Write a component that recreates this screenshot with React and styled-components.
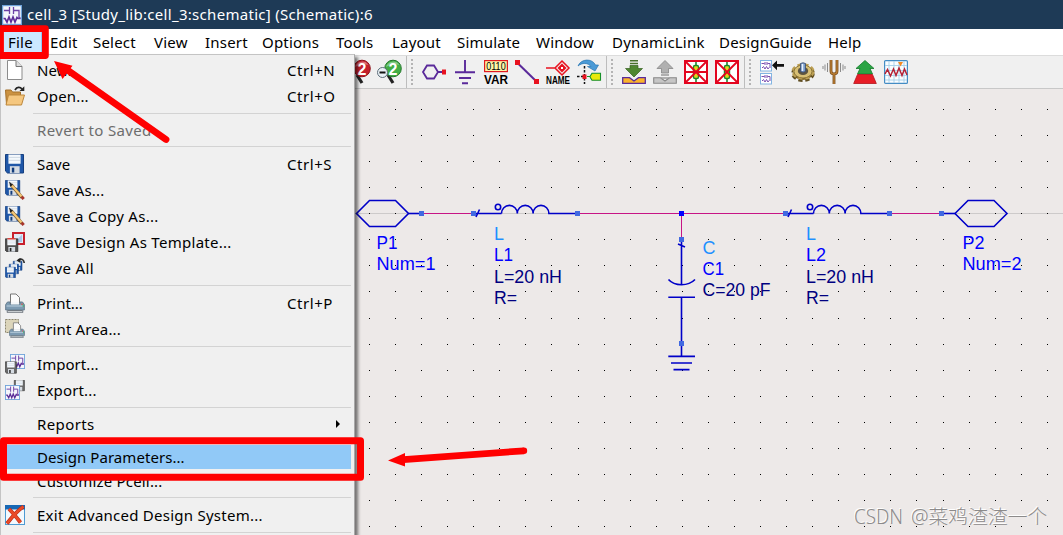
import React from 'react';
import styled, { createGlobalStyle } from 'styled-components';

const GlobalStyle = createGlobalStyle`
  body {
    margin: 0;
    overflow: hidden;
    font-family: 'Noto Sans', 'Open Sans', sans-serif;
    font-size: 15px;
    color: #000;
  }
`;

const Window = styled.div`
  position: relative;
  display: flex;
  flex-direction: column;
  width: 1063px;
  height: 535px;
  overflow: hidden;
  background: #ede9e8;
`;

const TitleBar = styled.header`
  display: flex;
  align-items: center;
  gap: 5px;
  flex: none;
  height: 29px;
  padding-left: 2px;
  color: #fff;
  background: #1e3a56;
  white-space: pre;
`;

const TitleText = styled.span`
  margin-top: -1px;
  letter-spacing: 0.3px;
`;

const MenuBar = styled.nav`
  display: flex;
  flex: none;
  height: 26px;
  background: #fff;
`;

const MenuBarItem = styled.div`
  box-sizing: border-box;
  flex: none;
  width: ${({ $width }) => $width}px;
  padding-left: 8px;
  line-height: 27px;
  letter-spacing: 0.2px;
  background: ${({ $open }) => ($open ? '#cce8ff' : 'transparent')};
  border-right: ${({ $open }) => ($open ? '1px solid #90c8f6' : '0')};
`;

const Toolbar = styled.div`
  display: flex;
  flex: none;
  box-sizing: border-box;
  height: 34px;
  padding-left: 339px;
  background: #f0f0f0;
  border-top: 1px solid #dcdcdc;
  border-bottom: 1px solid #c8c8c8;
`;

const ToolGroup = styled.div`
  display: flex;
  align-items: center;
  box-sizing: border-box;
  gap: 7px;
  width: ${({ $width }) => $width};
  padding-left: 7px;
  border-left: ${({ $first }) => ($first ? '0' : '1px solid #bdbdbd')};
`;

const Handle = styled.div`
  flex: none;
  width: 2px;
  height: 26px;
  margin-left: -3px;
  margin-right: 2px;
  background: repeating-linear-gradient(#b4b4b4 0 2px, transparent 2px 4px);
`;

const ToolIcon = styled.svg`
  flex: none;
  width: 24px;
  height: 24px;
  overflow: visible;
`;

const Canvas = styled.main`
  flex: 1;
  min-height: 0;
`;

const Drawing = styled.svg`
  display: block;
  font-family: 'Liberation Sans', Arial, sans-serif;
  font-size: 18.8px;
`;

const Popup = styled.div`
  position: absolute;
  top: 54px;
  left: 0;
  box-sizing: border-box;
  width: 355px;
  height: 490px;
  padding-top: 2px;
  background: #f0f0f0;
  border: 1px solid #c4c4c4;
  border-right-color: #a8a8a8;
  box-shadow: 3px 3px 3px rgba(0, 0, 0, 0.5);
`;

const MenuItem = styled.div`
  display: flex;
  align-items: center;
  box-sizing: border-box;
  height: ${({ $height }) => $height || 26}px;
  margin: ${({ $margin }) => $margin || '0'};
  margin-right: 3px;
  padding-left: 4px;
  color: ${({ $disabled }) => ($disabled ? '#6d6d6d' : '#000')};
  background: ${({ $active }) => ($active ? '#91c9f7' : 'transparent')};
`;

const ItemIcon = styled.svg`
  flex: none;
  width: 20px;
  height: 20px;
  margin-right: 12px;
`;

const ItemLabel = styled.span`
  flex: 1;
  letter-spacing: ${({ $spacing }) => $spacing || 0}px;
`;

const Shortcut = styled.span`
  width: 64px;
  letter-spacing: 0.55px;
`;

const SubArrow = styled.span`
  width: 0;
  margin-right: 11px;
  border: 4px solid transparent;
  border-left: 4px solid #000;
  border-right: 0;
`;

const Separator = styled.div`
  height: 1px;
  margin: ${({ $top }) => $top}px 3px ${({ $bottom }) => $bottom}px 32px;
  background: #d3d3d3;
`;

const Marks = styled.svg`
  position: absolute;
  inset: 0;
`;

const Watermark = styled.div`
  position: absolute;
  left: 854px;
  top: 503px;
  display: flex;
  gap: 7px;
  font: 300 19.8px/28px 'Noto Sans', 'Noto Sans CJK SC', sans-serif;
  color: #8c8a8a;
  text-shadow: -1px -1px 0 #fff;
  white-space: nowrap;
`;

const WatermarkLatin = styled.span`
  transform: scaleX(${({ $scale }) => $scale});
  transform-origin: left;
  width: ${({ $width }) => $width}px;
`;

/* ---------- menu icons, 20 x 20 ---------- */

const Floppy = ({ x = 0, y = 0, size = 20, color = '#1f57a8', dark = '#123c7c' }) => (
  <g transform={`translate(${x} ${y}) scale(${size / 20})`}>
    <path d="M0.5 0.5H19V19.5H2.5L0.5 17.5Z" fill={color} stroke={dark} />
    <path d="M3.5 0.5H16V10H3.5Z" fill="#f4f8fc" />
    <path d="M4 3.5H15.5M4 6.5H15.5" stroke="#cfd8e2" />
    <path d="M5 12.5H15V19.5H5Z" fill="#d5dbe2" />
    <path d="M7 14H9.5V19H7Z" fill={dark} />
  </g>
);

const Pencil = () => (
  <g>
    <path d="M6 4.5L17 17.5" stroke="#7c5a28" strokeWidth="3.4" />
    <path d="M6.5 5L16.5 16.5" stroke="#f5c878" strokeWidth="2" />
    <path d="M4 1.5L8 4.8L5.3 6.8Z" fill="#222" />
    <path d="M16.6 16.8L18.7 19" stroke="#a8342b" strokeWidth="3" />
  </g>
);

const SchematicTile = ({ x = 0, y = 0, size = 20 }) => (
  <g transform={`translate(${x} ${y}) scale(${size / 20})`}>
    <rect x="0.6" y="0.6" width="18.8" height="18.8" fill="#f4f6fc" stroke="#6fa3da" strokeWidth="1.2" />
    <path
      d="M2 5.5H7M7.5 2V9M11.5 2V9M12 5.5H17V13H18.5"
      fill="none"
      stroke="#6b41a6"
      strokeWidth="1.3"
    />
    <path
      d="M1.5 13.5H3L5 17L7 12L9 17L11 12L13 17L15 12.5L16 13.5H18.5"
      fill="none"
      stroke="#5b2e98"
      strokeWidth="1.7"
    />
  </g>
);

const Printer = ({ x = 0, y = 0, size = 20 }) => (
  <g transform={`translate(${x} ${y}) scale(${size / 20})`}>
    <path d="M5.5 10V1H11L14.5 4.5V10Z" fill="#fbfbfb" stroke="#777" />
    <path d="M2.5 9L0.7 11.5V17H19.3V11.5L17.5 9H15V11H5V9Z" fill="#7d9bb2" stroke="#667c8e" />
    <path d="M6 9H14V11.5H6Z" fill="#f4f7f9" />
    <path d="M1.5 13H18.5" stroke="#bcd0de" />
    <path d="M2.5 17.5H17.5L18 19.3H2Z" fill="#dde2e5" stroke="#697078" strokeWidth="0.9" />
    <path d="M17 10.5V12" stroke="#e25345" strokeWidth="1.3" />
    <path d="M18.2 11.5V14" stroke="#43b06a" />
  </g>
);

const menuIcons = {
  blank: (
    <g>
      <path d="M2.5 0.5H11L17 6.5V19.5H2.5Z" fill="#fff" stroke="#8b8b8b" />
      <path d="M11 0.5V6.5H17" fill="#dedede" stroke="#777" />
    </g>
  ),
  folder: (
    <g>
      <path d="M0.5 4H6L7.5 6H15.5V18.5H1.5Z" fill="#cb9241" stroke="#a5712b" />
      <path d="M3.5 9H19.5L16.5 19H1Z" fill="#f5c77f" stroke="#bd873b" />
      <path d="M10 4C12 0.8 15 0.8 17 3" fill="none" stroke="#222" strokeWidth="1.8" />
      <path d="M14.5 5H19.3V0.3Z" fill="#222" />
    </g>
  ),
  save: <Floppy size={19.5} />,
  saveAs: (
    <g>
      <Floppy size={15.5} />
      <Pencil />
    </g>
  ),
  template: (
    <g>
      <rect x="8" y="1" width="11" height="11" fill="#dfeaf6" stroke="#c8202c" strokeWidth="2" />
      <path d="M10 10L17 2.5V10Z" fill="#a9c6e8" />
      <Floppy y={6.5} size={13.5} color="#4d4d4d" dark="#262626" />
      <path d="M2.5 6.8H10.5" stroke="#e23b35" strokeWidth="1.4" />
    </g>
  ),
  saveAll: (
    <g>
      <Floppy x={8} y={3} size={9.5} />
      <Floppy x={4} y={6} size={10} />
      <Floppy y={9} size={11} />
      <path d="M13 2C17 0 19 2 19.2 5" fill="none" stroke="#333" strokeWidth="1.7" />
      <path d="M11.5 2.5L15.5 0V5Z" fill="#222" />
    </g>
  ),
  print: <Printer />,
  printArea: (
    <g>
      <rect x="0.5" y="0.5" width="13" height="13" fill="#dcd5ba" stroke="#8c866f" strokeDasharray="2 1" />
      <Printer x={4} y={3} size={16} />
    </g>
  ),
  importFile: (
    <g>
      <SchematicTile x={5} y={0} size={15} />
      <Floppy y={7.5} size={12} color="#6a6a6a" dark="#2c2c2c" />
    </g>
  ),
  exportFile: (
    <g>
      <Floppy x={9} y={0} size={11} color="#6a6a6a" dark="#2c2c2c" />
      <SchematicTile x={0} y={5} size={15} />
    </g>
  ),
  exit: (
    <g>
      <rect x="0.5" y="0.5" width="19" height="19" fill="#f3f9fe" stroke="#4e9ad2" />
      <path d="M0 0H20V4.5H0Z" fill="#1768b5" />
      <path d="M4 4C7 7 12 13 15.5 17.5M18.5 1.5C12 6 7 12 2 18.5" fill="none" stroke="#b92b14" strokeWidth="3.8" />
      <path d="M4 4C7 7 12 13 15.5 17.5M18.5 1.5C12 6 7 12 2 18.5" fill="none" stroke="#ea4a28" strokeWidth="2.6" />
    </g>
  ),
};

/* ---------- toolbar icons, 24 x 24 ---------- */

const Zoom2 = ({ color, dark, minus }) => (
  <ToolIcon viewBox="0 0 24 24">
    <path d="M11 15L16 23" stroke="#222" strokeWidth="3.2" />
    <circle cx="16" cy="8.5" r="8.3" fill={color} stroke={dark} strokeWidth="1" />
    <path d="M9 7A7.5 7.5 0 0 1 22.5 5Q15 3 9 7Z" fill="#fff" opacity="0.35" />
    <text x="11.5" y="14.5" fill="#fff" fontFamily="Liberation Sans" fontWeight="700" fontSize="16">2</text>
    {minus && (
      <g>
        <circle cx="5.5" cy="12.5" r="5" fill="#e9f1f6" stroke="#5e6e7b" />
        <path d="M2.5 12.5H8.5" stroke="#111" strokeWidth="2" />
      </g>
    )}
  </ToolIcon>
);

const PortIcon = () => (
  <ToolIcon viewBox="0 0 24 24">
    <path d="M1 12L5 5.5H12L16 12L12 18.5H5ZM16 12H20" fill="none" stroke="#5a2a9a" strokeWidth="1.8" />
    <path d="M20 9.5H24V14.5H20Z" fill="#e8121f" />
  </ToolIcon>
);

const GroundIcon = () => (
  <ToolIcon viewBox="0 0 24 24">
    <path d="M12 0V12M2 12.3H22M6 18H18M9 23.2H15" fill="none" stroke="#5a2a9a" strokeWidth="1.9" />
  </ToolIcon>
);

const VarIcon = () => (
  <ToolIcon viewBox="0 0 24 24">
    <rect x="0.6" y="0.6" width="22.8" height="11" fill="#fdf6a8" stroke="#e0191f" strokeWidth="1.2" />
    <text x="2.2" y="10" textLength="19.5" lengthAdjust="spacingAndGlyphs" fontFamily="Liberation Sans" fontSize="10.5">0110</text>
    <text x="0" y="24" textLength="24" lengthAdjust="spacingAndGlyphs" fontFamily="Liberation Sans" fontWeight="700" fontSize="12">VAR</text>
  </ToolIcon>
);

const WireIcon = () => (
  <ToolIcon viewBox="0 0 24 24">
    <path d="M2 2.5L22 22" stroke="#5a2a9a" strokeWidth="2" />
    <path d="M0 0H5V5H0ZM19 19H24V24H19Z" fill="#e8121f" />
  </ToolIcon>
);

const NameIcon = () => (
  <ToolIcon viewBox="0 0 24 24">
    <path d="M0 8H9M16 1L23 8L16 15L9 8Z" fill="none" stroke="#e8121f" strokeWidth="1.5" />
    <path d="M16 3.5L20.5 8L16 12.5L11.5 8Z" fill="#e8121f" />
    <path d="M15 7H17V9H15Z" fill="#fff" />
    <text x="0" y="24" textLength="24" lengthAdjust="spacingAndGlyphs" fontFamily="Liberation Sans" fontWeight="700" fontSize="10">NAME</text>
  </ToolIcon>
);

const RotateIcon = () => (
  <ToolIcon viewBox="0 0 24 24">
    <path d="M7.5 6V24M0 16.5H6" stroke="#111" strokeWidth="1.5" strokeDasharray="2.5 1.5" />
    <path d="M1 6C4 -1.5 15 -2 18.5 5H21.5L18 11L10.5 6.5H14C11 2.5 5 2.5 1 6Z" fill="#4a9ad6" stroke="#2976b2" strokeWidth="0.7" />
    <path d="M5.5 14.5H9.5V19H5.5Z" fill="#e8121f" />
    <path d="M10 16.5H13L15 13.2H23.5V20.2H15L13 17" fill="#e9e90c" stroke="#17902a" strokeWidth="1.1" />
  </ToolIcon>
);

const PushIcon = () => (
  <ToolIcon viewBox="0 0 24 24">
    <path d="M0.7 17.7H7.5L12 21L16.5 17.7H23.3V23.3H0.7Z" fill="#fbb32b" stroke="#5a2a9a" strokeWidth="1.3" />
    <path d="M8 0.8H16M8 3.5H16" stroke="#47702a" strokeWidth="1.6" />
    <path d="M8 5.5H16V8.5H20.5L12 17L3.5 8.5H8Z" fill="#4f8730" stroke="#35601f" strokeWidth="0.7" />
  </ToolIcon>
);

const PopIcon = () => (
  <ToolIcon viewBox="0 0 24 24">
    <path d="M0.7 17.7H7.5L12 21L16.5 17.7H23.3V23.3H0.7Z" fill="#c6c6c6" stroke="#888" strokeWidth="1.1" />
    <path d="M12 0.5L20 8.5H15.5V13H8.5V8.5H4Z" fill="#b0b0b0" stroke="#858585" strokeWidth="0.8" />
    <path d="M8 15H16M8 18H16" stroke="#999" strokeWidth="1.4" />
  </ToolIcon>
);

const DeactivateIcon = ({ shorted }) => (
  <ToolIcon viewBox="0 0 24 24">
    <rect x="1" y="1" width="22" height="22" fill="#fff" stroke="#e3051f" strokeWidth="2" />
    <path d="M12 2V22" stroke="#177b25" strokeWidth="1.5" />
    <rect x="9.5" y="5.5" width="5" height="13" rx="1.5" fill="#e3d51a" stroke="#198a2a" strokeWidth="1.4" />
    <path d="M2 2L22 22M22 2L2 22" stroke="#e3051f" strokeWidth="1.8" />
    {shorted && <path d="M1 12H23" stroke="#e3051f" strokeWidth="2" />}
  </ToolIcon>
);

const HierarchyIcon = () => (
  <ToolIcon viewBox="0 0 24 24">
    {[0, 13].map((y) => (
      <g key={y} transform={`translate(0 ${y})`}>
        <rect x="0.5" y="0.5" width="11" height="10.5" fill="#fff" stroke="#82b4e2" />
        <path d="M1.5 3.5H4.5M5 2V5M7 2V5M7.5 3.5H10V8M2 8L3.5 6.5L5 9L6.5 6.5L8 9L9 7.5" fill="none" stroke="#6b3ba8" strokeWidth="0.9" />
      </g>
    ))}
    <path d="M12 5.3L17 0.5V4H24V6.8H17V10.2Z" fill="#111" />
  </ToolIcon>
);

const GearIcon = () => (
  <ToolIcon viewBox="0 0 24 24">
    <ellipse cx="12" cy="13.5" rx="9.8" ry="6.5" fill="#8b7030" stroke="#5f4d20" strokeWidth="4" strokeDasharray="4 2.6" />
    <ellipse cx="12" cy="11.5" rx="9.8" ry="6.5" fill="#d5b966" stroke="#bda054" strokeWidth="3.6" strokeDasharray="4 2.6" />
    <ellipse cx="12" cy="11.5" rx="9" ry="6.5" fill="#d8bf73" stroke="#7d682f" strokeWidth="0.8" />
    <ellipse cx="12" cy="11" rx="5.2" ry="4" fill="#5c5440" />
    <path d="M9.5 3.5Q12 2 14.5 3.5V11.5Q12 13 9.5 11.5Z" fill="#7a9cca" stroke="#384b70" strokeWidth="0.8" />
    <path d="M11.5 4V11" stroke="#e9f1fb" strokeWidth="1.5" />
  </ToolIcon>
);

const TuneIcon = () => (
  <ToolIcon viewBox="0 0 24 24">
    <path d="M9 0V11Q9 14 12 14Q15 14 15 11V0M12 14V24" fill="none" stroke="#704516" strokeWidth="2.8" />
    <path d="M9 0V11Q9 14 12 14Q15 14 15 11V0M12 14V24" fill="none" stroke="#b77b32" strokeWidth="1.5" />
    <path d="M5.5 3V12M3 4.5V10.5M1 6V9M18.5 3V12M21 4.5V10.5M23 6V9" stroke="#8b8b8b" />
  </ToolIcon>
);

const OptimizeIcon = () => (
  <ToolIcon viewBox="0 0 24 24">
    <path d="M12 0.5L21 8.5H17L19.5 14H4.5L7 8.5H3Z" fill="#2ba545" stroke="#147b2b" strokeWidth="0.8" />
    <path d="M4.5 14.5H19.5L23.3 23.5H0.7Z" fill="#e71d26" stroke="#b3131b" strokeWidth="0.8" />
  </ToolIcon>
);

const DataDisplayIcon = () => (
  <ToolIcon viewBox="0 0 24 24">
    <rect x="0.6" y="0.6" width="22.8" height="22.8" rx="1" fill="#fafdff" stroke="#438cc4" strokeWidth="1.2" />
    <path d="M5 1V23M10 1V23M15 1V23M20 1V23M1 5.5H23M1 10.5H23M1 15.5H23M1 20H23" stroke="#a5cfe9" strokeWidth="0.9" />
    <path d="M1 14L3.5 9.5L6.5 16L9.5 9L12 15.5L15 8L18 15.5L20.5 9L23 15" fill="none" stroke="#b42236" strokeWidth="1.5" />
    <path d="M14 2H19L16.5 6.5Z" fill="#f28a24" />
  </ToolIcon>
);

/* ---------- schematic ---------- */

const blue = '#0000c8';

const Pin = ({ x, y, color = '#4169e1' }) => (
  <rect x={x - 2.5} y={y - 2.5} width="5" height="5" fill={color} />
);

const Label = ({ x, y, width, color, children }) => (
  <text x={x} y={y - 0.5} textLength={width} lengthAdjust="spacingAndGlyphs" fill={color}>{children}</text>
);

const Port = ({ x }) => (
  <path
    d={`M${x} 213.5L${x + 13} 200.5H${x + 39}L${x + 52} 213.5L${x + 39} 226.5H${x + 13}Z`}
    fill="none"
    stroke={blue}
    strokeWidth="1.6"
  />
);

const Inductor = ({ x, name, nameWidth }) => (
  <g>
    <g fill="none" stroke={blue} strokeWidth="1.6">
      <path d={`M${x} 213.5H${x + 28}M${x + 2.5} 217L${x + 6} 209.5`} />
      <path d={`M${x + 28} 213.5a7.8 8 0 0 1 15.8 0a7.8 8 0 0 1 15.8 0a7.8 8 0 0 1 15.8 0H${x + 104}`} />
      <circle cx={x + 24.5} cy="207" r="2.7" />
    </g>
    <Pin x={x} y={213.5} />
    <Pin x={x + 104} y={213.5} />
    <Label x={x + 20.5} y={240} width={10} color="#1e90ff">L</Label>
    <Label x={x + 20.5} y={261} width={nameWidth} color="#0000ff">{name}</Label>
    <Label x={x + 20.5} y={283} width={68} color="#000080">L=20 nH</Label>
    <Label x={x + 20.5} y={304} width={23} color="#000080">R=</Label>
  </g>
);

const dots = [];
for (let row = 0; row < 17; row += 1) {
  for (let col = 0; col < 27; col += 1) {
    dots.push([Math.round(369 + col * 26.07), Math.round(109 + row * 26.07)]);
  }
}

const Schematic = () => (
  <Drawing width="1063" height="446" viewBox="0 89 1063 446">
    <path d="M0 213.5H1063" stroke="#cdcaca" />
    <path d={dots.map(([x, y]) => `M${x} ${y}h1v1h-1z`).join('')} fill="#000" />
    <path d="M421 213.5H473M577 213.5H785M889 213.5H941M681.5 213V239" stroke="#c71585" />

    <Port x={356.5} />
    <path d="M408.5 213.5H421" stroke={blue} strokeWidth="1.6" />
    <Pin x={421.5} y={213.5} />
    <Label x={376.5} y={249} width={21} color="#0000ff">P1</Label>
    <Label x={376.5} y={270} width={59} color="#0000ff">Num=1</Label>

    <Inductor x={473.5} name="L1" nameWidth={19} />
    <Inductor x={785.5} name="L2" nameWidth={20} />

    <g fill="none" stroke={blue} strokeWidth="1.6">
      <path d="M681.5 240V284.5M678 244L685 247M668.5 279.5Q673 284.7 681.5 284.7Q690 284.7 695 279.5" />
      <path d="M668.3 297.3H695M681.5 297.3V356.3M668.3 356.4H695M671 363H692M673.5 369.6H689.5" />
    </g>
    <Pin x={681.5} y={213.5} color="#0000ff" />
    <Pin x={681.5} y={239.5} />
    <Pin x={681.5} y={343.5} />
    <Label x={702.5} y={254} width={13} color="#1e90ff">C</Label>
    <Label x={702.5} y={275} width={21.5} color="#0000ff">C1</Label>
    <Label x={702.5} y={296} width={68} color="#000080">C=20 pF</Label>

    <Port x={955} />
    <path d="M941.5 213.5H955" stroke={blue} strokeWidth="1.6" />
    <Pin x={941.5} y={213.5} />
    <Label x={962.5} y={249} width={22} color="#0000ff">P2</Label>
    <Label x={962.5} y={270} width={59} color="#0000ff">Num=2</Label>
  </Drawing>
);

const menuBar = [
  ['File', 42], ['Edit', 43], ['Select', 61], ['View', 51], ['Insert', 57], ['Options', 74],
  ['Tools', 56], ['Layout', 65], ['Simulate', 79], ['Window', 76], ['DynamicLink', 107],
  ['DesignGuide', 109], ['Help', 60],
];

const fileMenu = [
  { label: 'New...', icon: 'blank', keys: 'Ctrl+N' },
  { label: 'Open...', icon: 'folder', keys: 'Ctrl+O', spacing: 0.15 },
  { sep: [4, 3] },
  { label: 'Revert to Saved', disabled: true, spacing: 0.35 },
  { sep: [3, 4] },
  { label: 'Save', icon: 'save', keys: 'Ctrl+S', spacing: 0.2 },
  { label: 'Save As...', icon: 'saveAs', spacing: 0.2 },
  { label: 'Save a Copy As...', icon: 'saveAs', spacing: 0.28 },
  { label: 'Save Design As Template...', icon: 'template', spacing: 0.28 },
  { label: 'Save All', icon: 'saveAll', spacing: 0.38 },
  { sep: [4, 4] },
  { label: 'Print...', icon: 'print', keys: 'Ctrl+P' },
  { label: 'Print Area...', icon: 'printArea', spacing: 0.13 },
  { sep: [4, 4] },
  { label: 'Import...', icon: 'importFile', spacing: 0.05 },
  { label: 'Export...', icon: 'exportFile', spacing: 0.15 },
  { sep: [4, 3] },
  { label: 'Reports', submenu: true, spacing: 0.4 },
  { label: 'Design Parameters...', active: true, height: 24, margin: '8px 0 -1px', spacing: 0.06 },
  { label: 'Customize Pcell...', spacing: 0.18 },
  { sep: [3, 4] },
  { label: 'Exit Advanced Design System...', icon: 'exit', spacing: 0.25 },
  { sep: [4, 4] },
];

const FileMenu = () => (
  <Popup>
    {fileMenu.map((item, i) => (item.sep ? (
      <Separator key={i} $top={item.sep[0]} $bottom={item.sep[1]} />
    ) : (
      <MenuItem key={i} $disabled={item.disabled} $active={item.active} $height={item.height} $margin={item.margin}>
        <ItemIcon viewBox="0 0 20 20">{menuIcons[item.icon]}</ItemIcon>
        <ItemLabel $spacing={item.spacing}>{item.label}</ItemLabel>
        {item.keys && <Shortcut>{item.keys}</Shortcut>}
        {item.submenu && <SubArrow />}
      </MenuItem>
    )))}
  </Popup>
);

export default function App() {
  return (
    <Window>
      <GlobalStyle />
      <TitleBar>
        <svg width="20" height="20" viewBox="0 0 20 20"><SchematicTile /></svg>
        <TitleText>cell_3 [Study_lib:cell_3:schematic] (Schematic):6</TitleText>
      </TitleBar>
      <MenuBar>
        {menuBar.map(([label, width]) => (
          <MenuBarItem key={label} $width={width} $open={label === 'File'}>{label}</MenuBarItem>
        ))}
      </MenuBar>
      <Toolbar>
        <ToolGroup $first $width="67px">
          <Zoom2 color="#c4202a" dark="#8c1018" />
          <Zoom2 color="#42ad45" dark="#22772b" minus />
        </ToolGroup>
        <ToolGroup $width="200px">
          <Handle />
          <PortIcon />
          <GroundIcon />
          <VarIcon />
          <WireIcon />
          <NameIcon />
          <RotateIcon />
        </ToolGroup>
        <ToolGroup $width="138px">
          <Handle />
          <PushIcon />
          <PopIcon />
          <DeactivateIcon shorted />
          <DeactivateIcon />
        </ToolGroup>
        <ToolGroup $width="auto">
          <Handle />
          <HierarchyIcon />
          <GearIcon />
          <TuneIcon />
          <OptimizeIcon />
          <DataDisplayIcon />
        </ToolGroup>
      </Toolbar>
      <Canvas>
        <Schematic />
      </Canvas>
      <FileMenu />
      <Watermark>
        <WatermarkLatin $scale={0.95} $width={50}>CSDN</WatermarkLatin>
        <span>@菜鸡渣渣一个</span>
      </Watermark>
      <Marks width="1063" height="535">
        <g fill="none" stroke="#f00" strokeLinejoin="round">
          <path d="M0.5 28.7H45.4V55.5H0.5Z" strokeWidth="6.8" />
          <path d="M3.5 440.8H360.5V477.3H3.5Z" strokeWidth="7" />
          <path d="M66 69L166 139.5" strokeWidth="6.8" strokeLinecap="round" />
          <path d="M400 459.8L524 450.8" strokeWidth="6.8" />
        </g>
        <path d="M54 61L72.5 65.8L62.5 79ZM388 460.5L405 453V466.5Z" fill="#f00" />
        <circle cx="524" cy="450.8" r="3.2" fill="#f00" />
      </Marks>
    </Window>
  );
}
